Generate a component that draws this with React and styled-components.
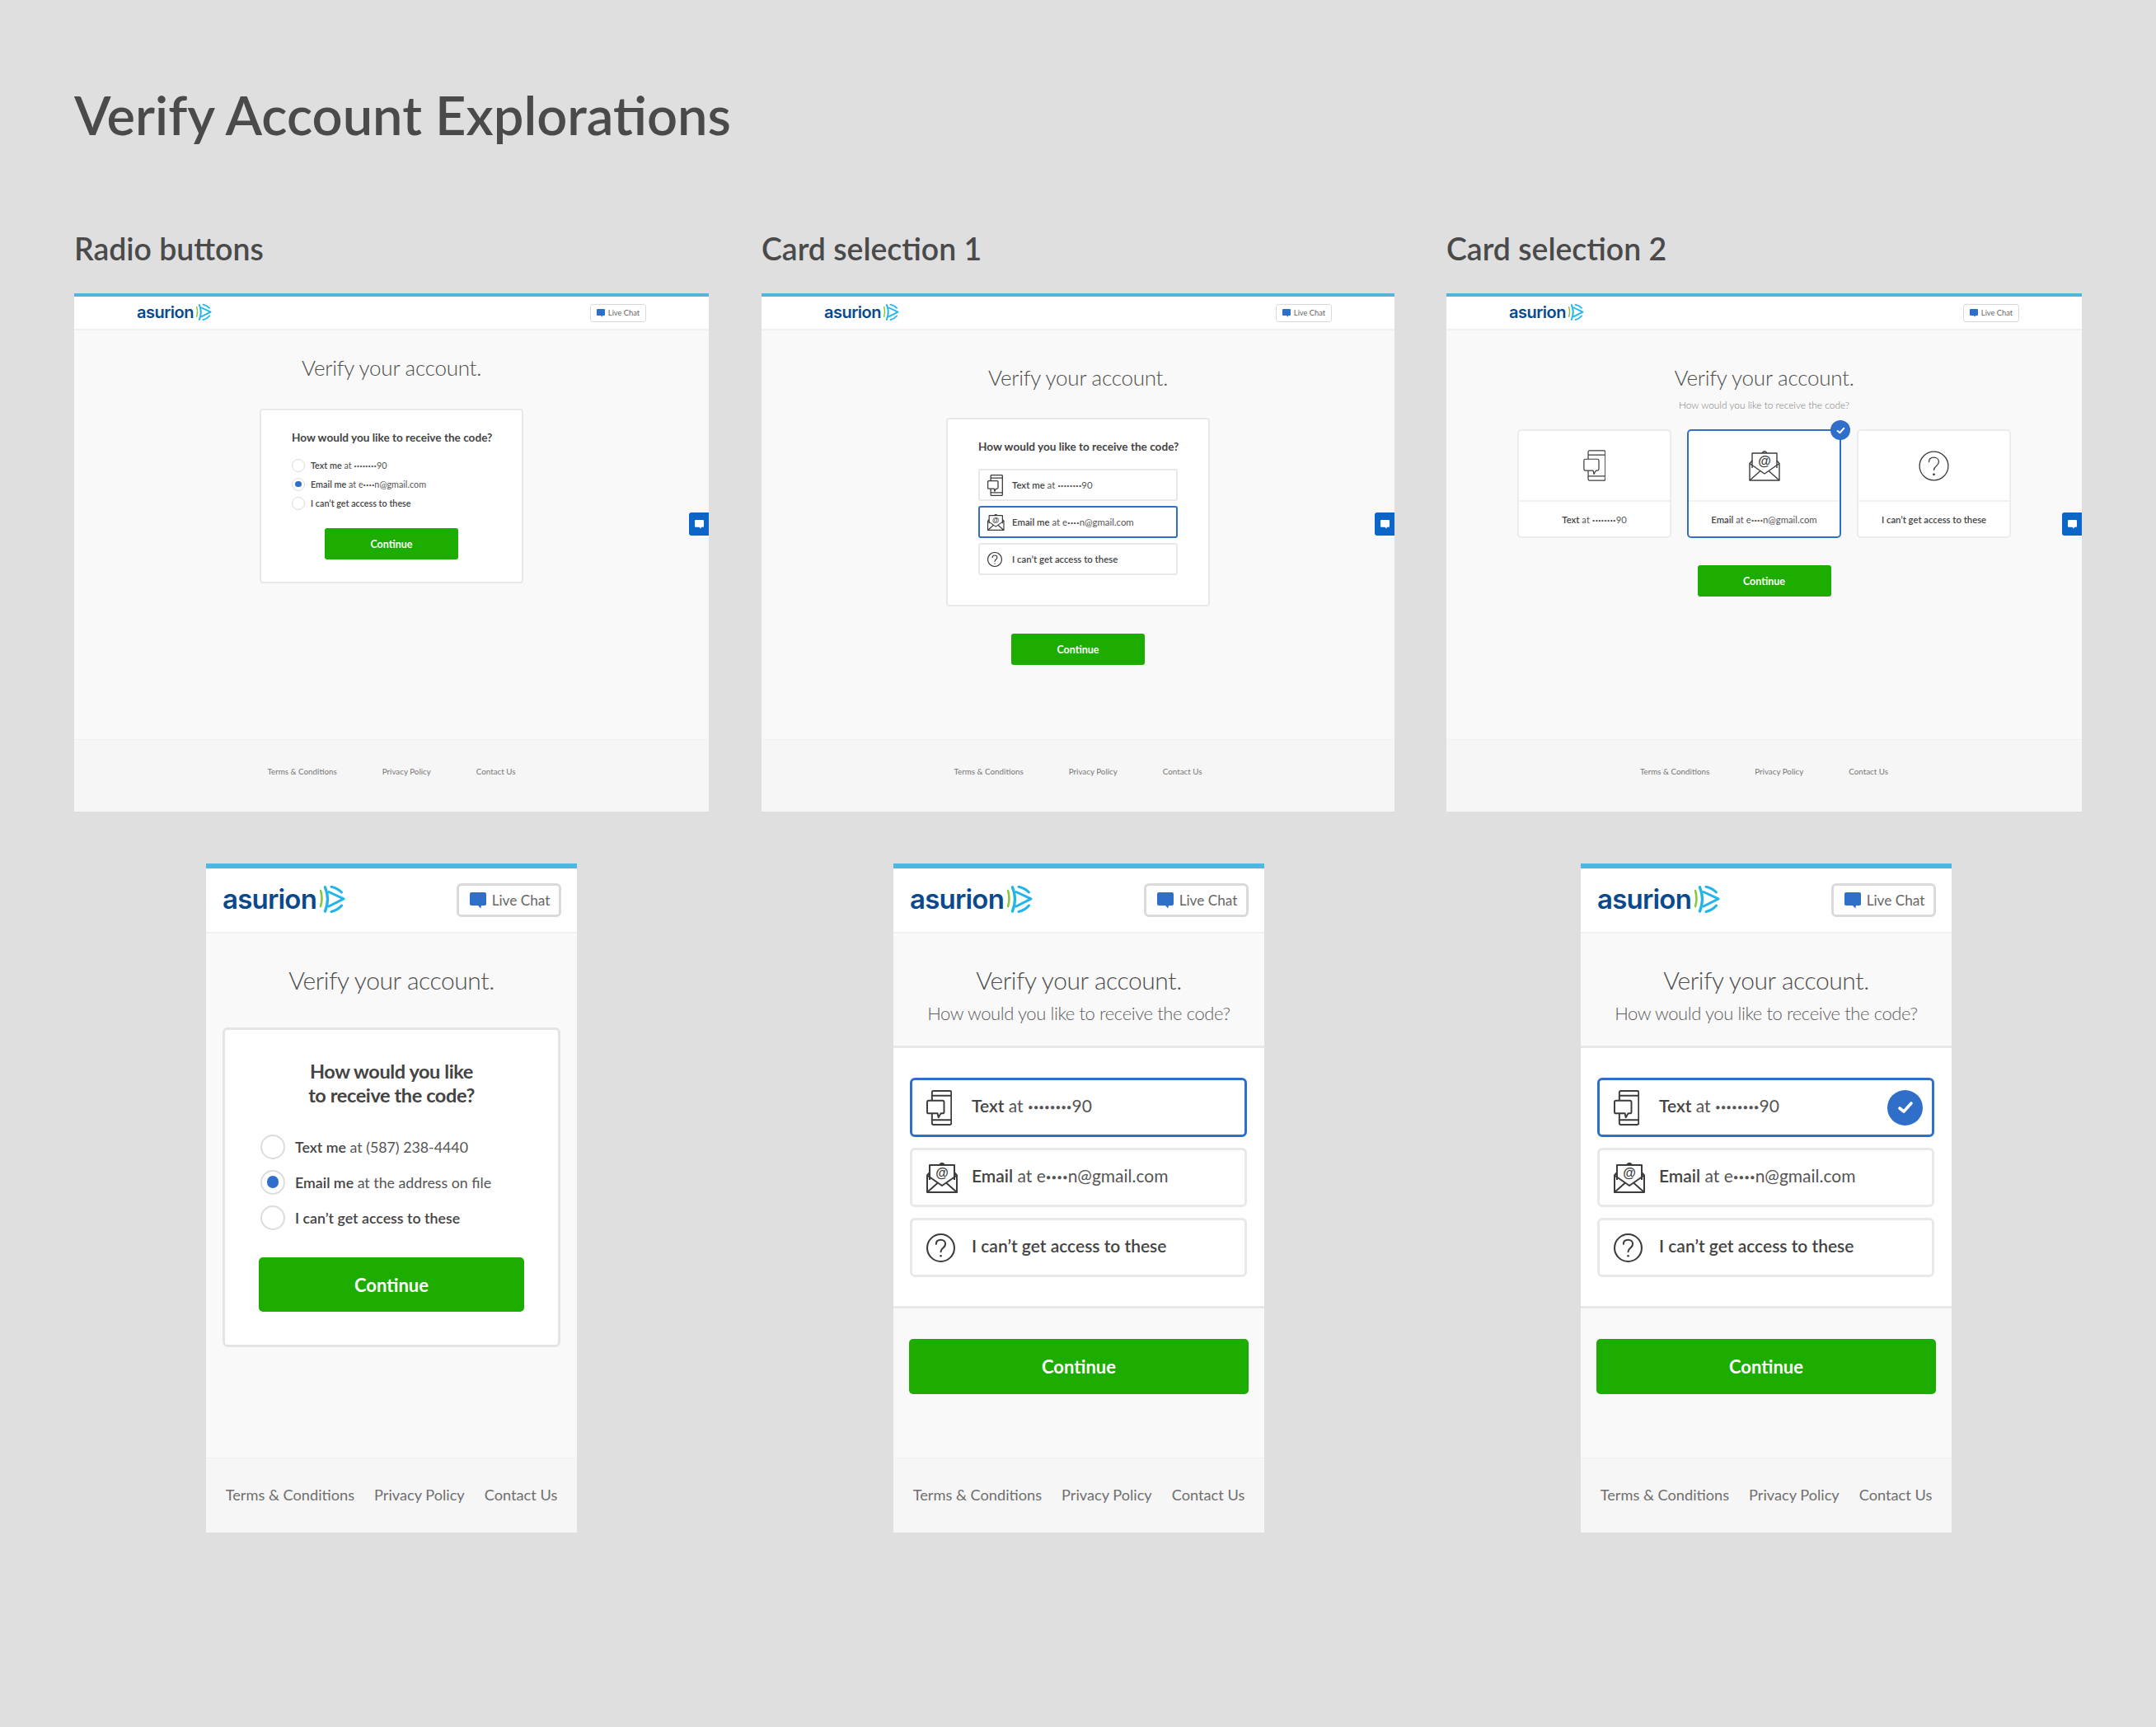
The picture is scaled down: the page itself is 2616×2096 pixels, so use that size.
import React from "react";
import styled, { createGlobalStyle, css } from "styled-components";

const FONT = `"Lato", "Noto Sans", "Liberation Sans", sans-serif`;

const Global = createGlobalStyle`
  html, body { margin: 0; padding: 0; background: #dfdfdf; }
  body { font-family: ${FONT}; color: #444; }
  * { box-sizing: border-box; }
`;

const Page = styled.div`
  width: 2616px;
  height: 2096px;
  background: #dfdfdf;
  padding: 99px 0 0 90px;
  overflow: hidden;
`;
const PageTitle = styled.h1`
  margin: 0;
  font-size: 65px;
  line-height: 80px;
  font-weight: 600;
  color: #4a4a4a;
`;
const DesktopRow = styled.div`
  display: grid;
  grid-template-columns: 834px 831px 771px;
  margin-top: 100px;
`;
const SectionTitle = styled.h2`
  margin: 0 0 31px;
  font-size: 37.4px;
  line-height: 46px;
  font-weight: 600;
  color: #4a4a4a;
`;
const PhoneRow = styled.div`
  display: flex;
  gap: 384px;
  margin: 63px 0 0 160px;
`;

const Dots = styled.span`
  font-size: 0.55em;
  vertical-align: 0.14em;
`;

const Desktop = styled.section`
  position: relative;
  display: flex;
  flex-direction: column;
  width: ${(p) => p.$w}px;
  height: 629px;
  background: #f9f9f9;
  border-top: 4px solid #52b5e0;
`;
const DesktopHeader = styled.header`
  display: flex;
  align-items: center;
  justify-content: space-between;
  height: 41px;
  padding: 0 76px;
  background: #fff;
  border-bottom: 2px solid #f1f1f1;
`;
const DesktopMain = styled.main`
  flex: 1;
  display: flex;
  flex-direction: column;
  align-items: center;
  padding-top: ${(p) => p.$top}px;
`;
const DesktopTitle = styled.div`
  font-size: 26px;
  line-height: 30px;
  font-weight: 300;
  letter-spacing: -0.25px;
  color: #4d4d4d;
`;
const DesktopSub = styled.div`
  margin: 11px 0 0;
  font-size: 11.9px;
  line-height: 16px;
  font-weight: 300;
  color: #7c7c7c;
`;
const DesktopCard = styled.div`
  width: 320px;
  height: ${(p) => p.$h}px;
  margin-top: ${(p) => p.$top}px;
  padding: 24px 37px 0;
  background: #fff;
  border: 2px solid #e8e8e8;
  border-radius: 4px;
  display: flex;
  flex-direction: column;
`;
const DesktopHeading = styled.div`
  font-size: 13.6px;
  line-height: 18px;
  font-weight: 700;
  color: #444;
  white-space: nowrap;
`;
const RadioList = styled.div`
  display: flex;
  flex-direction: column;
  margin: ${(p) => p.$top}px 0 0 ${(p) => p.$left || 0}px;
`;
const RadioRow = styled.div`
  display: flex;
  align-items: center;
  height: ${(p) => p.$h}px;
  gap: ${(p) => p.$gap}px;
  font-size: ${(p) => p.$fs}px;
  color: #555;
  white-space: nowrap;
  b { font-weight: 600; color: #444; }
`;
const RadioDot = styled.span`
  flex: none;
  display: flex;
  align-items: center;
  justify-content: center;
  width: ${(p) => p.$size}px;
  height: ${(p) => p.$size}px;
  border-radius: 50%;
  background: #fff;
  border: ${(p) => (p.$size > 20 ? 2 : 1.5)}px solid #dcdcdc;
  &::after {
    content: "";
    display: ${(p) => (p.$on ? "block" : "none")};
    width: 55%;
    height: 55%;
    border-radius: 50%;
    background: #2f6fc9;
  }
`;
const ContinueButton = styled.button`
  display: block;
  flex: none;
  align-self: ${(p) => p.$align || "auto"};
  width: ${(p) => p.$w}px;
  height: ${(p) => p.$h}px;
  margin: ${(p) => p.$m};
  padding: 0;
  border: 0;
  border-radius: ${(p) => (p.$h > 50 ? 5 : 3)}px;
  background: #1cad00;
  color: #fff;
  font-family: ${FONT};
  font-size: ${(p) => p.$fs}px;
  font-weight: 700;
`;
const OptionStack = styled.div`
  display: flex;
  flex-direction: column;
  gap: 6px;
  margin-top: 18px;
`;
const DesktopOption = styled.div`
  display: flex;
  align-items: center;
  height: 39px;
  padding-left: 9px;
  background: #fff;
  border: 2px solid ${(p) => (p.$on ? "#2f6fc9" : "#e8e8e8")};
  border-radius: 3px;
  font-size: 11.4px;
  color: #555;
  white-space: nowrap;
  b { font-weight: 600; color: #444; }
`;
const DesktopIconSlot = styled.span`
  display: flex;
  align-items: center;
  width: 30px;
  flex: none;
`;
const CardRow = styled.div`
  display: flex;
  gap: 19px;
  margin-top: 21px;
`;
const TileCard = styled.div`
  position: relative;
  width: 187px;
  height: 132px;
  display: flex;
  flex-direction: column;
  background: #fff;
  border: 2px solid ${(p) => (p.$on ? "#2f6fc9" : "#ececec")};
  border-radius: 5px;
`;
const TileIcon = styled.div`
  height: 86px;
  display: flex;
  align-items: center;
  justify-content: center;
  border-bottom: 2px solid #f1f1f1;
`;
const TileLabel = styled.div`
  flex: 1;
  display: flex;
  align-items: center;
  justify-content: center;
  font-size: 11.3px;
  color: #555;
  white-space: nowrap;
  b { font-weight: 600; color: #444; }
`;
const CheckBadge = styled.span`
  flex: none;
  display: flex;
  align-items: center;
  justify-content: center;
  width: ${(p) => p.$size}px;
  height: ${(p) => p.$size}px;
  border-radius: 50%;
  background: #2f6fc9;
`;
const TileBadge = styled.span`
  position: absolute;
  top: -13px;
  right: -13px;
`;
const DesktopFooter = styled.footer`
  flex: none;
  height: 88px;
  padding-bottom: 12px;
  display: flex;
  align-items: center;
  justify-content: center;
  gap: 55px;
  background: #f6f6f6;
  border-top: 1px solid #f1f1f1;
  font-size: 9.8px;
  color: #777;
`;
const ChatTab = styled.div`
  position: absolute;
  right: 0;
  top: 262px;
  width: 24px;
  height: 28px;
  display: flex;
  align-items: center;
  justify-content: center;
  background: #0b66c8;
  border-radius: 3px 0 0 3px;
`;

const LiveChatBox = styled.div`
  display: flex;
  align-items: center;
  justify-content: center;
  background: #fff;
  color: #666;
  white-space: nowrap;
  ${(p) =>
    p.$big
      ? css`
          width: 127px;
          height: 41px;
          gap: 7px;
          padding-left: 2px;
          border: 3px solid #dadada;
          border-radius: 6px;
          font-size: 17.2px;
        `
      : css`
          width: 68px;
          height: 22px;
          gap: 4px;
          border: 1.5px solid #dadada;
          border-radius: 3px;
          font-size: 9.3px;
        `}
`;
const LogoWrap = styled.div`
  display: flex;
  align-items: center;
  gap: ${(p) => (p.$big ? 4 : 3)}px;
  margin-top: -2px;
`;
const LogoText = styled.span`
  font-family: "Inter", ${FONT};
  font-size: ${(p) => (p.$big ? 33 : 20)}px;
  line-height: 1;
  font-weight: 600;
  letter-spacing: ${(p) => (p.$big ? -0.8 : -0.5)}px;
  color: #0a4a8c;
`;

const Phone = styled.section`
  display: flex;
  flex-direction: column;
  width: 450px;
  height: 812px;
  background: #f9f9f9;
  border-top: 6px solid #52b5e0;
`;
const PhoneHeader = styled.header`
  flex: none;
  display: flex;
  align-items: center;
  justify-content: space-between;
  height: 79px;
  padding: 0 19px 0 20px;
  background: #fff;
  border-bottom: 2px solid #f1f1f1;
`;
const PhoneTitleBlock = styled.div`
  flex: none;
  height: ${(p) => p.$h}px;
  padding-top: 36px;
  text-align: center;
  border-bottom: ${(p) => (p.$rule ? "3px solid #e8e8e8" : "0")};
`;
const PhoneTitle = styled.div`
  font-size: 30px;
  line-height: 40px;
  font-weight: 300;
  letter-spacing: -0.4px;
  color: #4d4d4d;
`;
const PhoneSub = styled.div`
  font-size: 22px;
  line-height: 41px;
  font-weight: 300;
  letter-spacing: -0.4px;
  color: #5e5e5e;
`;
const PhoneCard = styled.div`
  width: 410px;
  height: 388px;
  margin: 0 0 0 20px;
  padding: 36px 40px 0;
  background: #fff;
  border: 3px solid #e4e4e4;
  border-radius: 6px;
`;
const PhoneHeading = styled.div`
  font-size: 23.5px;
  line-height: 29px;
  font-weight: 700;
  letter-spacing: -0.4px;
  text-align: center;
  color: #444;
`;
const PhoneOptionsBlock = styled.div`
  flex: none;
  height: 316px;
  padding: 36px 21px 0 20px;
  background: #fff;
  border-bottom: 3px solid #e8e8e8;
  display: flex;
  flex-direction: column;
  gap: 13px;
`;
const PhoneOption = styled.div`
  display: flex;
  align-items: center;
  height: 72px;
  padding: 0 11px 0 17px;
  background: #fff;
  border: 3px solid ${(p) => (p.$on ? "#2f6fc9" : "#e8e8e8")};
  border-radius: 6px;
  font-size: 21px;
  line-height: 1;
  color: #555;
  white-space: nowrap;
  b { font-weight: 600; color: #444; }
`;
const PhoneIconSlot = styled.span`
  flex: none;
  width: 55px;
  display: flex;
  align-items: center;
`;
const PhoneOptionText = styled.span`
  flex: 1;
  margin-top: -5px;
`;
const PhoneFooter = styled.footer`
  flex: none;
  margin-top: auto;
  height: 91px;
  padding-bottom: 3px;
  display: flex;
  align-items: center;
  justify-content: center;
  gap: 24px;
  background: #f6f6f6;
  border-top: 1px solid #f1f1f1;
  font-size: 18.2px;
  color: #6f6f6f;
  white-space: nowrap;
`;

const Bubble = ({ s = 20, c = "#2f6fc9" }) => (
  <svg width={s} height={s} viewBox="0 0 20 20">
    <path d="M2 0h16a2 2 0 0 1 2 2v12a2 2 0 0 1-2 2h-4l-.8 3.6L10 16H2a2 2 0 0 1-2-2V2a2 2 0 0 1 2-2z" fill={c} />
  </svg>
);

const Mark = ({ h }) => (
  <svg height={h} width={(h * 31) / 33} viewBox="0 0 31 33" fill="none" strokeLinecap="round">
    <path d="M1 6 Q4 15.5 1 25" stroke="#8cc63f" strokeWidth="2.6" />
    <path d="M6.5 1.8 Q12.5 16 6.5 31" stroke="#22b5ea" strokeWidth="3.4" />
    <path d="M11 7.5 L29 15.8 L11 25" stroke="#22b5ea" strokeWidth="3" strokeLinejoin="round" />
    <path d="M14 1.2 Q22 3 26.5 8" stroke="#22b5ea" strokeWidth="3" />
    <path d="M14 31.5 Q22 29.5 26.5 24" stroke="#22b5ea" strokeWidth="3" />
  </svg>
);

const Logo = ({ big }) => (
  <LogoWrap $big={big}>
    <LogoText $big={big}>asurion</LogoText>
    <Mark h={big ? 33 : 20} />
  </LogoWrap>
);

const LiveChat = ({ big }) => (
  <LiveChatBox $big={big}>
    <Bubble s={big ? 20 : 10} />
    Live Chat
  </LiveChatBox>
);

const PhoneIcon = ({ h = 43, sw = 2 }) => (
  <svg height={h} width={(h * 32) / 44} viewBox="0 0 32 44" fill="none" stroke="#3c3c3c" strokeWidth={sw} strokeLinejoin="round">
    <rect x="7" y="1" width="24" height="42" rx="2" />
    <path d="M7 7h24M7 37h24" />
    <path d="M3 13h17a2 2 0 0 1 2 2v12a2 2 0 0 1-2 2h-2l-3 5-1-5H3a2 2 0 0 1-2-2V15a2 2 0 0 1 2-2z" fill="#fff" />
  </svg>
);
const MailIcon = ({ h = 37, sw = 2 }) => (
  <svg height={h} width={(h * 38) / 37} viewBox="0 0 38 37" fill="none" stroke="#3c3c3c" strokeWidth={sw} strokeLinejoin="round">
    <path d="M4 21V3h30v18M15.500 3l2.500-2h2l2.500 2" />
    <path d="M4 12L1 15.500V36h36V15.500L34 12" />
    <path d="M1 15.500L19 28 37 15.500M1 36l13-11.500M37 36L24 24.500" />
    <text x="19" y="18" fontSize="16" textAnchor="middle" fill="#3c3c3c" stroke="none" fontWeight="700" fontFamily="Liberation Sans, sans-serif">@</text>
  </svg>
);
const HelpIcon = ({ s = 34, sw = 2 }) => (
  <svg width={s} height={s} viewBox="0 0 34 34" fill="none" stroke="#3c3c3c" strokeWidth={sw} strokeLinecap="round">
    <circle cx="17" cy="17" r="16" />
    <path d="M11.5 12.500C11.500 9 14 7.500 17 7.500s5.500 2 5.500 5c0 4.500-5.500 4.500-5.500 9" />
    <circle cx="17" cy="26.500" r="1.300" fill="#3c3c3c" stroke="none" />
  </svg>
);
const CheckMark = ({ s }) => (
  <svg width={s} height={s} viewBox="0 0 20 20" fill="none" stroke="#fff" strokeWidth="3.6" strokeLinecap="round" strokeLinejoin="round">
    <path d="M3 11l5 4 9-10" />
  </svg>
);

const Footer = ({ as: F }) => (
  <F>
    <span>Terms &amp; Conditions</span>
    <span>Privacy Policy</span>
    <span>Contact Us</span>
  </F>
);

const NUM = <Dots>••••••••</Dots>;
const MAIL = <>e<Dots>••••</Dots>n@gmail.com</>;

const DESKTOP_RADIOS = [
  <><b>Text me</b> at {NUM}90</>,
  <><b>Email me</b> at {MAIL}</>,
  <b>I can’t get access to these</b>,
];
const PHONE_RADIOS = [
  <><b>Text me</b> at (587) 238-4440</>,
  <><b>Email me</b> at the address on file</>,
  <b>I can’t get access to these</b>,
];

const Shell = ({ w, top, children }) => (
  <Desktop $w={w}>
    <DesktopHeader>
      <Logo />
      <LiveChat />
    </DesktopHeader>
    <DesktopMain $top={top}>{children}</DesktopMain>
    <Footer as={DesktopFooter} />
    <ChatTab>
      <Bubble s={11} c="#fff" />
    </ChatTab>
  </Desktop>
);

const DesktopRadio = () => (
  <Shell w={770} top={30}>
    <DesktopTitle>Verify your account.</DesktopTitle>
    <DesktopCard $h={212} $top={35}>
      <DesktopHeading>How would you like to receive the code?</DesktopHeading>
      <RadioList $top={13}>
        {DESKTOP_RADIOS.map((r, i) => (
          <RadioRow key={i} $h={23} $gap={7} $fs={10.8}>
            <RadioDot $size={16} $on={i === 1} />
            <span>{r}</span>
          </RadioRow>
        ))}
      </RadioList>
      <ContinueButton $w={162} $h={38} $fs={12.5} $m="19px 0 0" $align="center">Continue</ContinueButton>
    </DesktopCard>
  </Shell>
);

const DesktopCards1 = () => (
  <Shell w={768} top={42}>
    <DesktopTitle>Verify your account.</DesktopTitle>
    <DesktopCard $h={229} $top={34}>
      <DesktopHeading>How would you like to receive the code?</DesktopHeading>
      <OptionStack>
        <DesktopOption>
          <DesktopIconSlot><PhoneIcon h={26} sw={2.2} /></DesktopIconSlot>
          <span><b>Text me</b> at {NUM}90</span>
        </DesktopOption>
        <DesktopOption $on>
          <DesktopIconSlot><MailIcon h={20} sw={2.2} /></DesktopIconSlot>
          <span><b>Email me</b> at {MAIL}</span>
        </DesktopOption>
        <DesktopOption>
          <DesktopIconSlot><HelpIcon s={18} sw={2.2} /></DesktopIconSlot>
          <b>I can’t get access to these</b>
        </DesktopOption>
      </OptionStack>
    </DesktopCard>
    <ContinueButton $w={162} $h={38} $fs={12.5} $m="33px 0 0">Continue</ContinueButton>
  </Shell>
);

const DesktopCards2 = () => (
  <Shell w={771} top={42}>
    <DesktopTitle>Verify your account.</DesktopTitle>
    <DesktopSub>How would you like to receive the code?</DesktopSub>
    <CardRow>
      <TileCard>
        <TileIcon><PhoneIcon h={38} sw={1.4} /></TileIcon>
        <TileLabel><span><b>Text</b> at {NUM}90</span></TileLabel>
      </TileCard>
      <TileCard $on>
        <TileIcon><MailIcon h={37} sw={1.4} /></TileIcon>
        <TileLabel><span><b>Email</b> at {MAIL}</span></TileLabel>
        <TileBadge>
          <CheckBadge $size={24}><CheckMark s={11} /></CheckBadge>
        </TileBadge>
      </TileCard>
      <TileCard>
        <TileIcon><HelpIcon s={37} sw={1.2} /></TileIcon>
        <TileLabel><b>I can’t get access to these</b></TileLabel>
      </TileCard>
    </CardRow>
    <ContinueButton $w={162} $h={38} $fs={12.5} $m="33px 0 0">Continue</ContinueButton>
  </Shell>
);

const PhoneRadio = () => (
  <Phone>
    <PhoneHeader>
      <Logo big />
      <LiveChat big />
    </PhoneHeader>
    <PhoneTitleBlock $h={114}>
      <PhoneTitle>Verify your account.</PhoneTitle>
    </PhoneTitleBlock>
    <PhoneCard>
      <PhoneHeading>
        How would you like
        <br />
        to receive the code?
      </PhoneHeading>
      <RadioList $top={26} $left={3}>
        {PHONE_RADIOS.map((r, i) => (
          <RadioRow key={i} $h={43} $gap={12} $fs={17.8}>
            <RadioDot $size={30} $on={i === 1} />
            <span>{r}</span>
          </RadioRow>
        ))}
      </RadioList>
      <ContinueButton $w={322} $h={66} $fs={22} $m="27px 0 0 1px">Continue</ContinueButton>
    </PhoneCard>
    <Footer as={PhoneFooter} />
  </Phone>
);

const PhoneCards = ({ check }) => (
  <Phone>
    <PhoneHeader>
      <Logo big />
      <LiveChat big />
    </PhoneHeader>
    <PhoneTitleBlock $h={139} $rule>
      <PhoneTitle>Verify your account.</PhoneTitle>
      <PhoneSub>How would you like to receive the code?</PhoneSub>
    </PhoneTitleBlock>
    <PhoneOptionsBlock>
      <PhoneOption $on>
        <PhoneIconSlot><PhoneIcon h={43} /></PhoneIconSlot>
        <PhoneOptionText><b>Text</b> at {NUM}90</PhoneOptionText>
        {check && (
          <CheckBadge $size={43}><CheckMark s={20} /></CheckBadge>
        )}
      </PhoneOption>
      <PhoneOption>
        <PhoneIconSlot><MailIcon h={37} /></PhoneIconSlot>
        <PhoneOptionText><b>Email</b> at {MAIL}</PhoneOptionText>
      </PhoneOption>
      <PhoneOption>
        <PhoneIconSlot><HelpIcon s={35} /></PhoneIconSlot>
        <PhoneOptionText><b>I can’t get access to these</b></PhoneOptionText>
      </PhoneOption>
    </PhoneOptionsBlock>
    <ContinueButton $w={412} $h={67} $fs={22} $m="37px 0 0 19px">Continue</ContinueButton>
    <Footer as={PhoneFooter} />
  </Phone>
);

export default function App() {
  return (
    <Page>
      <Global />
      <PageTitle>Verify Account Explorations</PageTitle>
      <DesktopRow>
        <div>
          <SectionTitle>Radio buttons</SectionTitle>
          <DesktopRadio />
        </div>
        <div>
          <SectionTitle>Card selection 1</SectionTitle>
          <DesktopCards1 />
        </div>
        <div>
          <SectionTitle>Card selection 2</SectionTitle>
          <DesktopCards2 />
        </div>
      </DesktopRow>
      <PhoneRow>
        <PhoneRadio />
        <PhoneCards />
        <PhoneCards check />
      </PhoneRow>
    </Page>
  );
}
